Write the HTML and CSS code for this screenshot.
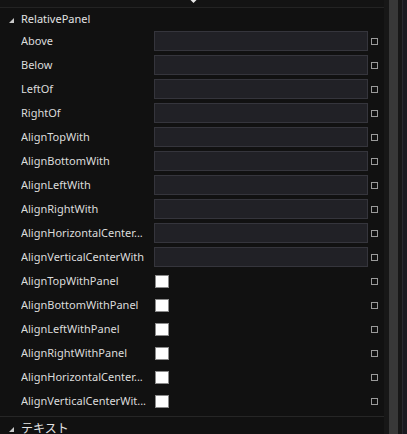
FILE: index.html
```html
<!DOCTYPE html>
<html>
<head>
<meta charset="utf-8">
<link rel="stylesheet" href="styles.css">
</head>
<body>
<div class="app">
  <div class="main">
    <div class="topstrip">
      <svg class="chev" width="9" height="5" viewBox="0 0 9 5"><path d="M0.5 0 L8.5 0 L4.5 4 Z" fill="#e8e8e8"/></svg>
    </div>
    <div class="section-head">
      <span class="tri"></span><span class="title">RelativePanel</span>
    </div>
    <div class="rows">
      <div class="row"><span class="label">Above</span><span class="text-box"></span><span class="mark"></span></div>
      <div class="row"><span class="label">Below</span><span class="text-box"></span><span class="mark"></span></div>
      <div class="row"><span class="label">LeftOf</span><span class="text-box"></span><span class="mark"></span></div>
      <div class="row"><span class="label">RightOf</span><span class="text-box"></span><span class="mark"></span></div>
      <div class="row"><span class="label">AlignTopWith</span><span class="text-box"></span><span class="mark"></span></div>
      <div class="row"><span class="label">AlignBottomWith</span><span class="text-box"></span><span class="mark"></span></div>
      <div class="row"><span class="label">AlignLeftWith</span><span class="text-box"></span><span class="mark"></span></div>
      <div class="row"><span class="label">AlignRightWith</span><span class="text-box"></span><span class="mark"></span></div>
      <div class="row"><span class="label">AlignHorizontalCenter...</span><span class="text-box"></span><span class="mark"></span></div>
      <div class="row"><span class="label">AlignVerticalCenterWith</span><span class="text-box"></span><span class="mark"></span></div>
      <div class="row"><span class="label">AlignTopWithPanel</span><span class="val"><span class="check"></span></span><span class="mark"></span></div>
      <div class="row"><span class="label">AlignBottomWithPanel</span><span class="val"><span class="check"></span></span><span class="mark"></span></div>
      <div class="row"><span class="label">AlignLeftWithPanel</span><span class="val"><span class="check"></span></span><span class="mark"></span></div>
      <div class="row"><span class="label">AlignRightWithPanel</span><span class="val"><span class="check"></span></span><span class="mark"></span></div>
      <div class="row"><span class="label">AlignHorizontalCenter...</span><span class="val"><span class="check"></span></span><span class="mark"></span></div>
      <div class="row"><span class="label">AlignVerticalCenterWit...</span><span class="val"><span class="check"></span></span><span class="mark"></span></div>
    </div>
    <div class="sep"></div>
    <div class="section-head">
      <span class="tri"></span><span class="title jp">テキスト</span>
    </div>
  </div>
  <div class="gutter"></div>
  <div class="scroll"></div>
  <div class="edge"></div>
  <div class="outer"></div>
</div>
</body>
</html>
```
FILE: styles.css
```css
html, body {
  margin: 0;
  padding: 0;
  background: #111111;
  overflow: hidden;
}
body {
  font-family: "Noto Sans", "Noto Sans CJK JP", sans-serif;
  font-size: 11px;
  color: #dcdcdc;
}
.app {
  display: flex;
  height: 434px;
}
.main {
  width: 384px;
  flex: none;
  background: #111111;
}
.topstrip {
  height: 7px;
  border-bottom: 1px solid #232323;
  background: #131313;
  position: relative;
}
.chev {
  position: absolute;
  left: 189px;
  top: -1px;
}
.section-head {
  height: 21px;
  display: flex;
  align-items: center;
}
.tri {
  width: 0;
  height: 0;
  margin-left: 9px;
  margin-right: 7px;
  margin-top: 3px;
  border-left: 5px solid transparent;
  border-bottom: 5px solid #c8c8c8;
}
.title {
  line-height: 21px;
  color: #e2e2e2;
}
.rows {
  display: flex;
  flex-direction: column;
}
.row {
  height: 24px;
  display: grid;
  grid-template-columns: 133px 214px 16px;
  align-items: center;
  padding-left: 21px;
}
.label {
  white-space: nowrap;
  overflow: hidden;
  line-height: 24px;
}
.text-box {
  height: 18px;
  border: 1px solid #35353c;
  background: #212126;
}
.val {
  display: flex;
  align-items: center;
}
.check {
  width: 12px;
  height: 11px;
  margin-left: 1px;
  background: #ffffff;
  border: 1px solid #8a8a8a;
}
.mark {
  width: 5px;
  height: 5px;
  margin-left: 3px;
  border: 1px solid #9a9a9a;
}
.sep {
  margin-top: 3px;
  height: 1px;
  background: #262626;
}
.jp {
  font-family: "Noto Sans CJK JP", sans-serif;
  font-size: 12px;
}
.gutter {
  width: 5px;
  background: #171717;
}
.scroll {
  width: 9px;
  background: #383838;
}
.edge {
  width: 4px;
  background: #171717;
}
.outer {
  flex: 1;
  background: #1a1a20;
  border-left: 1px solid #2a2a30;
}
```
